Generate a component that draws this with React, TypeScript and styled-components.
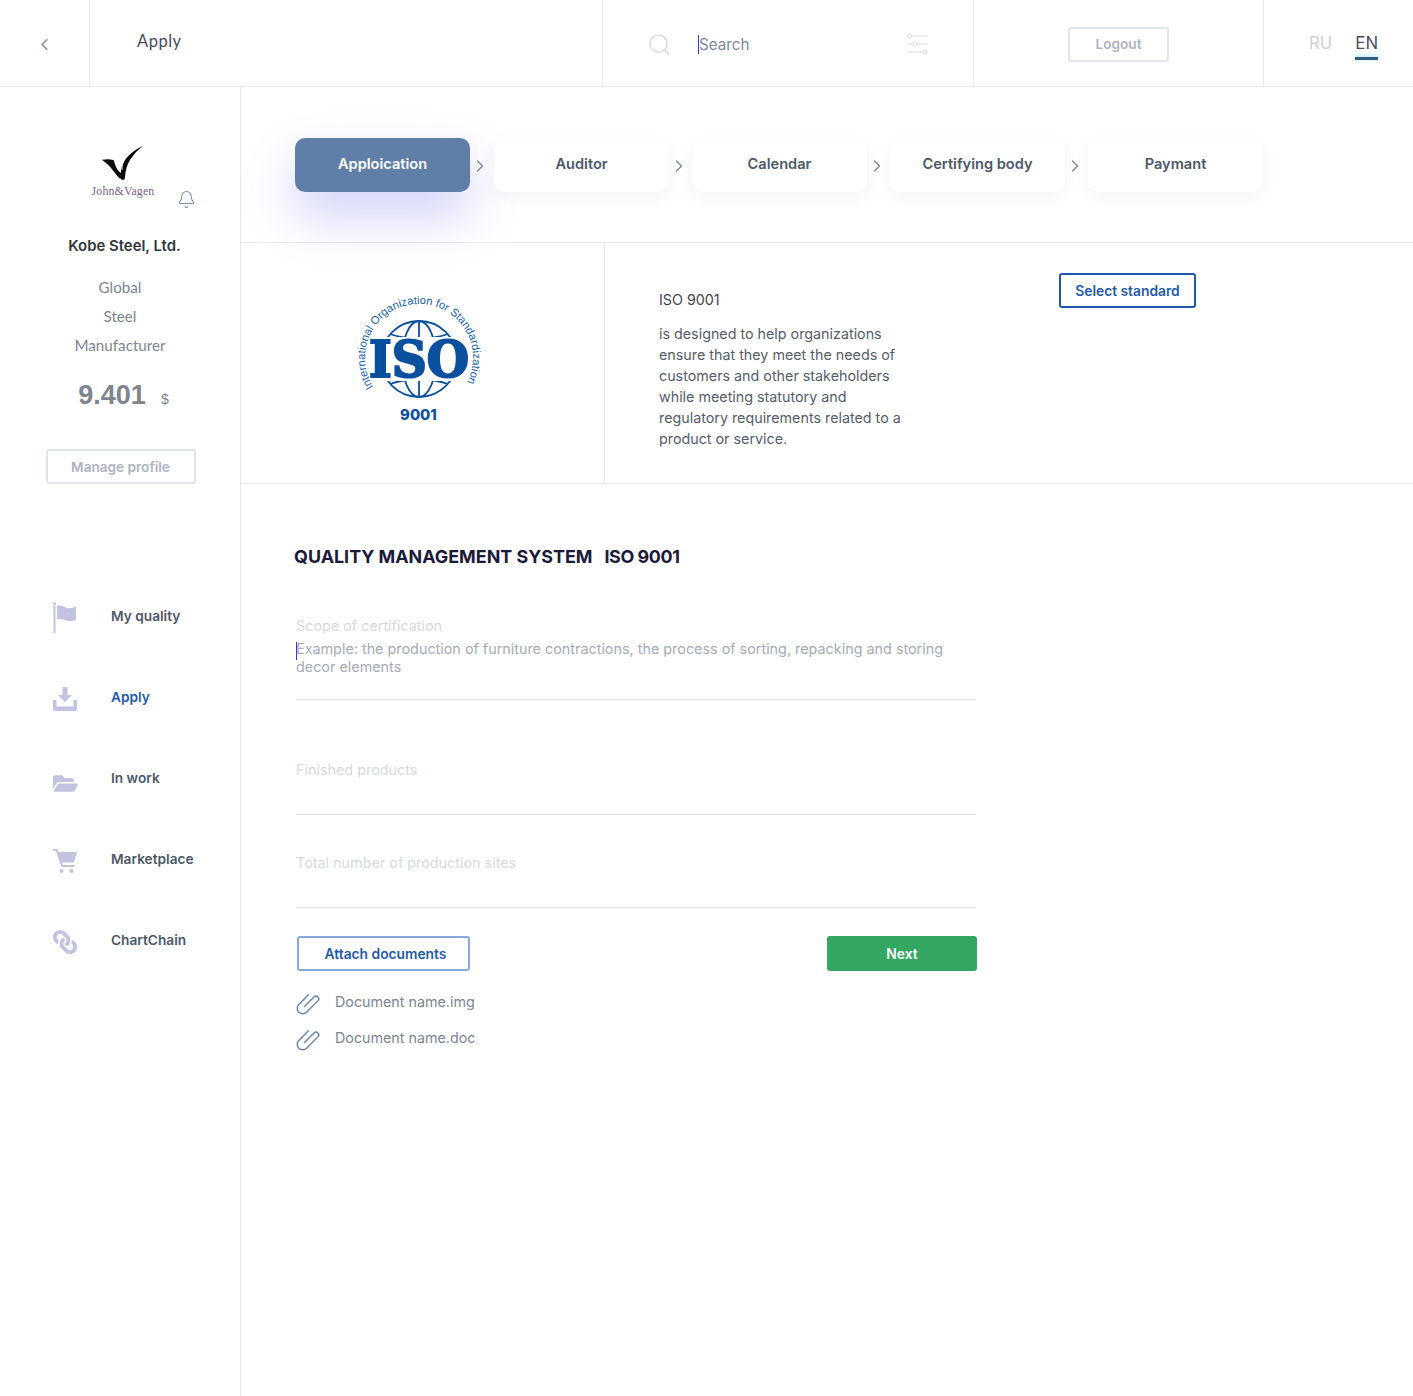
import { FC } from "react";
import styled, { createGlobalStyle } from "styled-components";
import { ChevronLeft, ChevronRight, Bell } from "lucide-react";
import { FaFolderOpen, FaLink } from "react-icons/fa";

const GlobalStyle = createGlobalStyle`
  html, body { margin: 0; padding: 0; background: #fff; }
  body { font-family: Inter, "Liberation Sans", sans-serif; }
  * { box-sizing: border-box; }
`;

const Page = styled.div`
  width: 1413px;
  height: 1396px;
  overflow: hidden;
  display: flex;
  flex-direction: column;
`;

const Header = styled.header`
  height: 87px;
  flex: none;
  display: flex;
  border-bottom: 1px solid #e8e9f0;
`;

const HeaderCell = styled.div<{ $width?: number }>`
  width: ${(p) => (p.$width ? `${p.$width}px` : "auto")};
  flex: ${(p) => (p.$width ? "none" : "1")};
  border-right: 1px solid #e8e9f0;
  display: flex;
  align-items: center;
  &:last-child { border-right: 0; }
`;

const BackCell = styled(HeaderCell)`
  padding: 3px 0 0 35px;
  color: #7b8ca3;
`;

const PageTitle = styled(HeaderCell)`
  padding: 0 0 5px 47px;
  font-family: Lato, sans-serif;
  font-size: 16.5px;
  letter-spacing: 0.5px;
  color: #4b4b5c;
`;

const SearchCell = styled(HeaderCell)`
  padding: 2px 44px 0 46px;
`;

const SearchInput = styled.div`
  flex: 1;
  margin-left: 28px;
  font-size: 15.2px;
  color: #7d8899;
  border-left: 1px solid #3a3ad0;
  line-height: 19px;
`;

const LogoutCell = styled(HeaderCell)`
  justify-content: center;
  padding-top: 2px;
`;

const GhostButton = styled.button<{ $width: number; $height: number }>`
  width: ${(p) => p.$width}px;
  height: ${(p) => p.$height}px;
  background: #fff;
  border: 2px solid #e1e4ea;
  border-radius: 3px;
  color: #aeb3c2;
  font: 600 13.6px Inter, sans-serif;
  padding: 0;
`;

const LangCell = styled(HeaderCell)`
  padding: 0 0 3px 45px;
  gap: 23px;
  margin-top: 2px;
`;

const Lang = styled.span<{ $active?: boolean }>`
  position: relative;
  font-size: 16.8px;
  color: ${(p) => (p.$active ? "#4d5260" : "#cdd0d8")};
  ${(p) =>
    p.$active &&
    `&::after {
      content: "";
      position: absolute;
      left: 0;
      right: 0;
      bottom: -7px;
      height: 3px;
      background: #35587e;
      box-shadow: 0 -1px 5px #8fe0f0;
    }`}
`;

const Body = styled.div`
  flex: 1;
  display: flex;
`;

const Sidebar = styled.aside`
  width: 241px;
  flex: none;
  border-right: 1px solid #e8e9f0;
  display: flex;
  flex-direction: column;
  align-items: center;
  padding-top: 58px;
`;

const LogoWrap = styled.div`
  position: relative;
  width: 150px;
  height: 69px;
  margin-left: 6px;
  display: flex;
  flex-direction: column;
  align-items: center;
`;

const LogoMarkSlot = styled.span`
  display: flex;
  margin-left: -2px;
`;

const LogoText = styled.span`
  font-family: "Liberation Serif", serif;
  font-size: 11.8px;
  letter-spacing: 0.2px;
  line-height: 12px;
  color: #7a6384;
  margin-top: 4px;
`;

const BellSlot = styled.span`
  position: absolute;
  left: 129px;
  top: 45px;
  color: #7e8ea5;
  display: flex;
`;

const Company = styled.div`
  margin: 23px 0 0 9px;
  font-size: 14.9px;
  font-weight: 600;
  line-height: 18px;
  color: #32373f;
`;

const Tags = styled.div`
  margin: 18px 0 0;
  display: flex;
  flex-direction: column;
  align-items: center;
  font-family: Lato, sans-serif;
  font-size: 15.2px;
  line-height: 29px;
  color: #7d8592;
`;

const Balance = styled.div`
  margin: 19px 0 0 7px;
  display: flex;
  align-items: baseline;
  gap: 15px;
  color: #7f858f;
  font-family: "Liberation Sans", sans-serif;
  font-size: 27px;
  font-weight: 700;
  line-height: 33px;
`;

const Currency = styled.span`
  font-size: 14px;
  font-weight: 400;
`;

const ManageSlot = styled.div`
  margin: 33px 0 0 1px;
`;

const Nav = styled.nav`
  margin-top: 113px;
  width: 100%;
  padding-left: 53px;
  display: flex;
  flex-direction: column;
  gap: 40px;
`;

const NavItem = styled.div`
  height: 41px;
  display: flex;
  align-items: center;
  color: #c1c3e0;
`;

const NavIcon = styled.span<{ $drop?: number }>`
  width: 58px;
  flex: none;
  display: flex;
  margin-top: ${(p) => p.$drop ?? 0}px;
`;

const NavLabel = styled.span<{ $active?: boolean }>`
  font-size: 13.7px;
  font-weight: 600;
  color: ${(p) => (p.$active ? "#1f5aa8" : "#4d5868")};
  margin-top: -4px;
`;

const Main = styled.main`
  flex: 1;
  display: flex;
  flex-direction: column;
  min-width: 0;
`;

const Steps = styled.div`
  height: 156px;
  flex: none;
  padding: 51px 0 0 54px;
  display: flex;
  border-bottom: 1px solid #e8e9f0;
`;

const StepGroup = styled.div`
  display: flex;
  height: 54px;
  align-items: center;
  &:first-child { margin-right: 1px; }
`;

const Step = styled.div<{ $active?: boolean }>`
  position: relative;
  width: 175px;
  height: 54px;
  border-radius: 10px;
  display: flex;
  align-items: center;
  justify-content: center;
  padding-bottom: 3px;
  font-size: 14.6px;
  font-weight: 600;
  color: ${(p) => (p.$active ? "#fff" : "#4d5868")};
  background: ${(p) => (p.$active ? "#5f7fa8" : "#fff")};
  box-shadow: ${(p) =>
    p.$active
      ? "0 24px 50px rgba(108, 108, 230, 0.32)"
      : "0 6px 16px rgba(40, 40, 70, 0.05)"};
`;

const StepArrow = styled.span`
  width: 23px;
  display: flex;
  justify-content: center;
  color: #7f8896;
  margin-top: 2px;
  transform: translateX(-2px);
`;

const StandardRow = styled.section`
  height: 241px;
  flex: none;
  display: flex;
  border-bottom: 1px solid #e8e9f0;
`;

const LogoCell = styled.div`
  width: 364px;
  flex: none;
  border-right: 1px solid #e8e9f0;
  padding: 48px 0 0 108px;
`;

const StandardInfo = styled.div`
  width: 399px;
  flex: none;
  padding: 48px 0 0 54px;
  color: #565d6a;
`;

const StandardName = styled.div`
  font-size: 14.3px;
  line-height: 18px;
  color: #3f4450;
`;

const StandardText = styled.p`
  margin: 14px 0 0;
  font-size: 14.3px;
  line-height: 21px;
  width: 250px;
`;

const OutlineButton = styled.button<{ $width: number; $soft?: boolean }>`
  width: ${(p) => p.$width}px;
  height: 35px;
  padding: 0 0 0 ${(p) => (p.$soft ? 4 : 0)}px;
  background: #fff;
  border: 2px solid ${(p) => (p.$soft ? "#8aa9d8" : "#1f5aa8")};
  border-radius: 3px;
  color: #1f5aa8;
  font: 600 13.8px Inter, sans-serif;
`;

const SelectSlot = styled.div`
  padding: 30px 0 0 55px;
`;

const Form = styled.section`
  padding: 62px 0 0 53px;
`;

const FormTitle = styled.h2`
  margin: 0 0 -1px;
  display: flex;
  gap: 12px;
  font-size: 17.9px;
  line-height: 22px;
  font-weight: 700;
  color: #1c1a3a;
`;

const TitleCode = styled.span`
  letter-spacing: -0.4px;
`;

const Fields = styled.div`
  margin-left: 2px;
  width: 680px;
`;

const Field = styled.div<{ $height: number; $top: number }>`
  height: ${(p) => p.$height}px;
  padding-top: ${(p) => p.$top}px;
  border-bottom: 1px solid #e4e5ea;
`;

const Placeholder = styled.div`
  font-size: 14.37px;
  line-height: 18px;
  color: #d6d9df;
`;

const FieldValue = styled.div`
  margin-top: 5px;
  font-size: 14.37px;
  line-height: 18px;
  color: #a6abb5;
  width: 660px;
  position: relative;
  &::before {
    content: "";
    position: absolute;
    left: 0;
    top: 2px;
    height: 18px;
    border-left: 1px solid #3a3ad0;
  }
`;

const Actions = styled.div`
  margin: 28px 0 0 3px;
  width: 680px;
  display: flex;
  justify-content: space-between;
`;

const NextButton = styled.button`
  width: 150px;
  height: 35px;
  padding: 0;
  border: 0;
  border-radius: 3px;
  background: #34a863;
  color: #fff;
  font: 600 13.8px Inter, sans-serif;
`;

const Documents = styled.div`
  margin: 14px 0 0 1px;
  display: flex;
  flex-direction: column;
`;

const DocumentRow = styled.div`
  height: 36px;
  display: flex;
  align-items: center;
  gap: 14px;
  color: #6a82ad;
`;

const DocumentName = styled.span`
  font-size: 14.3px;
  color: #7d8592;
  margin-top: -4px;
`;

const SearchGlyph: FC = () => (
  <svg width="21" height="21" viewBox="0 0 22 22" fill="none" stroke="#cfd3da" strokeWidth="1.200">
    <circle cx="10" cy="10" r="9" />
    <path d="M16.500 16.500l4.500 5" />
  </svg>
);

const Sliders: FC = () => (
  <svg width="22" height="22" viewBox="0 0 22 22" fill="none" stroke="#d6d9df" strokeWidth="1">
    <circle cx="2.500" cy="3" r="2" />
    <path d="M5 3h16M0.500 11h6M10 11h11M0.500 19h15" />
    <circle cx="8" cy="11" r="2" />
    <circle cx="18" cy="19" r="2" />
  </svg>
);

const FlagIcon: FC = () => (
  <svg width="24" height="32" viewBox="0 0 24 32" fill="currentColor">
    <circle cx="1.500" cy="1.500" r="1.500" />
    <rect x="0.500" y="4" width="2" height="27" />
    <path d="M4 4c4-1.500 7 1 10 2 3 .6 5-.4 9-1.500v13.500c-4 1-6 1.500-9 .8-3-1-6-2.500-10-1.200z" />
  </svg>
);

const InboxIcon: FC = () => (
  <svg width="24" height="24" viewBox="0 0 24 24" fill="currentColor">
    <path d="M9.500 0h5v8h4.500l-7 7-7-7h4.500z" />
    <path d="M0 13h3.500v6.500h17V13H24v9a2 2 0 0 1-2 2H2a2 2 0 0 1-2-2z" />
  </svg>
);

const CartIcon: FC = () => (
  <svg width="24" height="24" viewBox="0 0 24 24" fill="currentColor">
    <path d="M0 0h4.500l1.200 3H24l-3.200 10.500H9.200l.8 2.500h11.500v2H8.500L3 2H0z" />
    <circle cx="8.500" cy="22" r="2" />
    <circle cx="18.500" cy="22" r="2" />
  </svg>
);

const ClipIcon: FC = () => (
  <svg width="26" height="26" viewBox="0 0 26 26" fill="none" stroke="currentColor" strokeWidth="1.400" strokeLinecap="round">
    <g transform="rotate(45 13 13)">
      <path d="M7.500 7V20.500a5.500 5.500 0 0 0 11 0V4.500a2.750 2.750 0 0 0-5.500 0V18" />
    </g>
  </svg>
);

const VagenMark: FC = () => (
  <svg width="42" height="36" viewBox="0 0 46 37">
    <path
      d="M1 15c5-1 9-1 13 .500 1.500 5 3 11 8 14-.5-8 5-21 24-29.500-8 6-11 11-14 15-4 6-5 12-6 21-1 1-2 1-3 1-1-1-2-2-3-2-5-5-8-12-19-20z"
      fill="#0a0a0a"
    />
    <path d="M32 8c-5 3-9 8-9 18" stroke="#fff" strokeWidth="1" fill="none" />
  </svg>
);

const IsoLogo: FC = () => (
  <svg width="140" height="136" viewBox="0 0 140 136">
    <defs>
      <path id="isoArc" d="M24.500 96A54 54 0 1 1 115.500 96" />
      <clipPath id="globeCaps">
        <rect x="0" y="0" width="140" height="46" />
        <rect x="0" y="90" width="140" height="46" />
      </clipPath>
    </defs>
    <text fontFamily="'Liberation Sans', sans-serif" fontSize="11.200" fill="#1a63ad">
      <textPath href="#isoArc">International Organization for Standardization</textPath>
    </text>
    <g fill="none" stroke="#0b4f9f" strokeWidth="1.800" clipPath="url(#globeCaps)">
      <circle cx="70" cy="68" r="38" />
      <ellipse cx="70" cy="68" rx="17" ry="38" />
      <path d="M70 30v76M41 43c17 6 41 6 58 0M41 93c17-6 41-6 58 0" />
    </g>
    <text
      x="70"
      y="86"
      textAnchor="middle"
      fontFamily="'DejaVu Serif', serif"
      fontWeight="700"
      fontSize="50"
      fill="#0b4f9f"
      stroke="#0b4f9f"
      strokeWidth="2.200"
      textLength="100"
      lengthAdjust="spacingAndGlyphs"
    >
      ISO
    </text>
    <text
      x="69.500"
      y="129"
      textAnchor="middle"
      fontFamily="Inter, sans-serif"
      fontWeight="800"
      fontSize="14.800"
      fill="#0b4f9f"
    >
      9001
    </text>
  </svg>
);

const steps = ["Apploication", "Auditor", "Calendar", "Certifying body", "Paymant"];

const App: FC = () => (
  <>
    <GlobalStyle />
    <Page>
      <Header>
        <BackCell $width={90}>
          <ChevronLeft size={19} strokeWidth={1.8} />
        </BackCell>
        <PageTitle $width={513}>Apply</PageTitle>
        <SearchCell $width={371}>
          <SearchGlyph />
          <SearchInput>Search</SearchInput>
          <Sliders />
        </SearchCell>
        <LogoutCell $width={290}>
          <GhostButton $width={101} $height={35}>Logout</GhostButton>
        </LogoutCell>
        <LangCell>
          <Lang>RU</Lang>
          <Lang $active>EN</Lang>
        </LangCell>
      </Header>
      <Body>
        <Sidebar>
          <LogoWrap>
            <LogoMarkSlot>
              <VagenMark />
            </LogoMarkSlot>
            <LogoText>John&amp;Vagen</LogoText>
            <BellSlot>
              <Bell size={19} strokeWidth={1.3} />
            </BellSlot>
          </LogoWrap>
          <Company>Kobe Steel, Ltd.</Company>
          <Tags>
            <span>Global</span>
            <span>Steel</span>
            <span>Manufacturer</span>
          </Tags>
          <Balance>
            9.401 <Currency>$</Currency>
          </Balance>
          <ManageSlot>
            <GhostButton $width={150} $height={35}>Manage profile</GhostButton>
          </ManageSlot>
          <Nav>
            <NavItem>
              <NavIcon><FlagIcon /></NavIcon>
              <NavLabel>My quality</NavLabel>
            </NavItem>
            <NavItem>
              <NavIcon><InboxIcon /></NavIcon>
              <NavLabel $active>Apply</NavLabel>
            </NavItem>
            <NavItem>
              <NavIcon $drop={7}><FaFolderOpen size={25} /></NavIcon>
              <NavLabel>In work</NavLabel>
            </NavItem>
            <NavItem>
              <NavIcon><CartIcon /></NavIcon>
              <NavLabel>Marketplace</NavLabel>
            </NavItem>
            <NavItem>
              <NavIcon><FaLink size={24} style={{ transform: "scaleX(-1)" }} /></NavIcon>
              <NavLabel>ChartChain</NavLabel>
            </NavItem>
          </Nav>
        </Sidebar>
        <Main>
          <Steps>
            {steps.map((label, i) => (
              <StepGroup key={label}>
                <Step $active={i === 0}>{label}</Step>
                {i < steps.length - 1 && (
                  <StepArrow>
                    <ChevronRight size={20} strokeWidth={1.6} />
                  </StepArrow>
                )}
              </StepGroup>
            ))}
          </Steps>
          <StandardRow>
            <LogoCell>
              <IsoLogo />
            </LogoCell>
            <StandardInfo>
              <StandardName>ISO 9001</StandardName>
              <StandardText>
                is designed to help organizations ensure that they meet the needs of
                customers and other stakeholders while meeting statutory and
                regulatory requirements related to a product or service.
              </StandardText>
            </StandardInfo>
            <SelectSlot>
              <OutlineButton $width={137}>Select standard</OutlineButton>
            </SelectSlot>
          </StandardRow>
          <Form>
            <FormTitle>
              <span>QUALITY MANAGEMENT SYSTEM</span>
              <TitleCode>ISO 9001</TitleCode>
            </FormTitle>
            <Fields>
              <Field $height={133} $top={50}>
                <Placeholder>Scope of certification</Placeholder>
                <FieldValue>
                  Example: the production of furniture contractions, the process of sorting,
                  repacking and storing decor elements
                </FieldValue>
              </Field>
              <Field $height={115} $top={61}>
                <Placeholder>Finished products</Placeholder>
              </Field>
              <Field $height={93} $top={39}>
                <Placeholder>Total number of production sites</Placeholder>
              </Field>
            </Fields>
            <Actions>
              <OutlineButton $width={173} $soft>Attach documents</OutlineButton>
              <NextButton>Next</NextButton>
            </Actions>
            <Documents>
              <DocumentRow>
                <ClipIcon />
                <DocumentName>Document name.img</DocumentName>
              </DocumentRow>
              <DocumentRow>
                <ClipIcon />
                <DocumentName>Document name.doc</DocumentName>
              </DocumentRow>
            </Documents>
          </Form>
        </Main>
      </Body>
    </Page>
  </>
);

export default App;
